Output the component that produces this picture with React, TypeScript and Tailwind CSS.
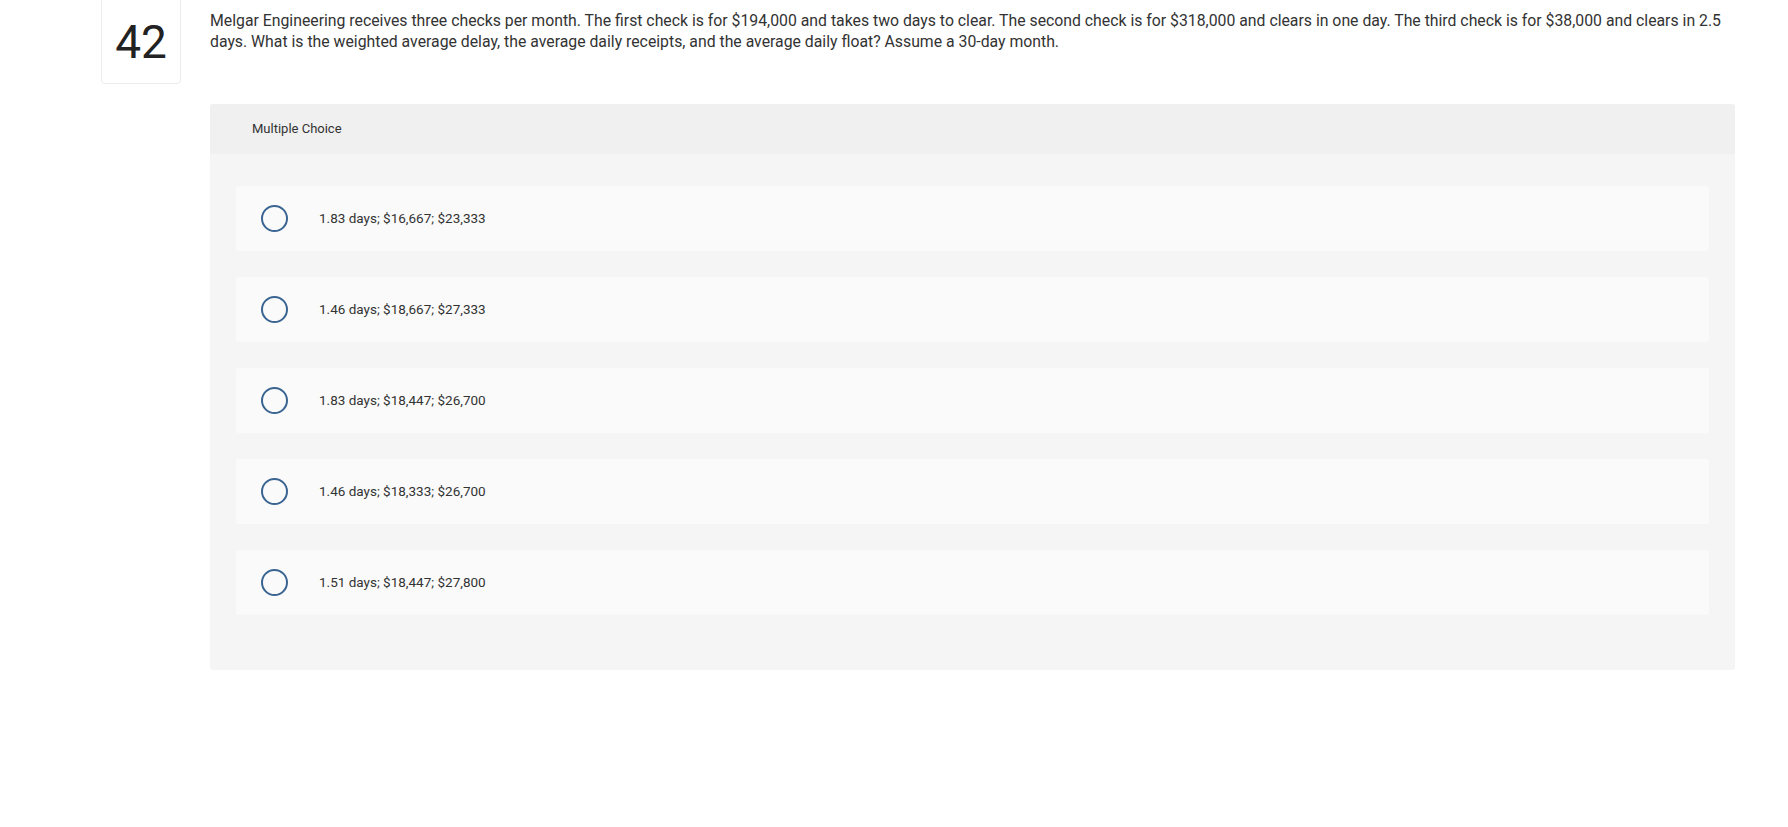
import React from "react";

const options = [
  "1.83 days; $16,667; $23,333",
  "1.46 days; $18,667; $27,333",
  "1.83 days; $18,447; $26,700",
  "1.46 days; $18,333; $26,700",
  "1.51 days; $18,447; $27,800",
];

export default function App() {
  return (
    <div className="w-[1788px] h-[827px] bg-white text-[#222]" style={{ fontFamily: "Roboto, 'Open Sans', sans-serif" }}>
      <div className="flex items-start pl-[101px]">
        <div className="w-[80px] h-[94px] -mt-[10px] border border-[#ececec] rounded-[4px] flex items-center justify-center pt-[10px]">
          <span className="text-[46px] leading-none text-[#222]">42</span>
        </div>
        <div className="ml-[29px] flex-1 pr-[53px]">
          <p className="pt-[10px] text-[15.8px] leading-[21px] text-[#333]">
            Melgar Engineering receives three checks per month. The first check is for $194,000 and takes two days to clear. The second check is for $318,000 and clears in one day. The third check is for $38,000 and clears in 2.5 days. What is the weighted average delay, the average daily receipts, and the average daily float? Assume a 30-day month.
          </p>
          <div className="mt-[52px] rounded-[3px] bg-[#f5f5f5] overflow-hidden">
            <div className="h-[50px] bg-[#f0f0f0] flex items-center pl-[42px] text-[13px] text-[#333]">
              Multiple Choice
            </div>
            <div className="px-[26px] pt-[32px] pb-[55px] flex flex-col gap-[26px]">
              {options.map((o) => (
                <div key={o} className="h-[65px] rounded-[3px] bg-[#fafafa] flex items-center">
                  <div className="ml-[25px] w-[27px] h-[27px] rounded-full border-2 border-[#3a6491]" />
                  <span className="ml-[31px] text-[13.5px] text-[#333]">{o}</span>
                </div>
              ))}
            </div>
          </div>
        </div>
      </div>
    </div>
  );
}
